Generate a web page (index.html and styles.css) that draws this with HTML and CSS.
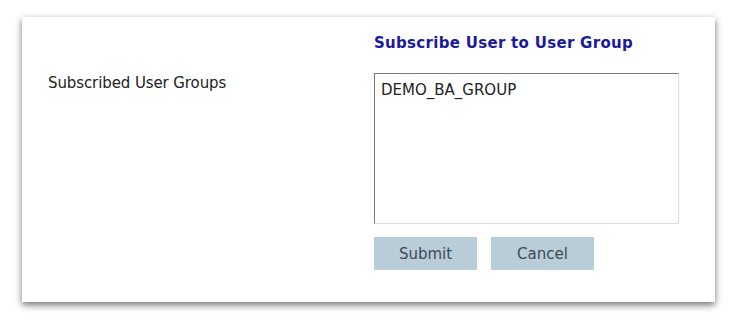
FILE: index.html
```html
<!DOCTYPE html>
<html lang="en">

<head>
  <meta charset="UTF-8">
  <meta name="viewport" content="width=device-width, initial-scale=1.0">
  <title>Subscribe User to User Group</title>
  <link rel="stylesheet" href="styles.css">
</head>

<body>

  <div class="panel">
    <div class="label-col">
      <span class="field-label">Subscribed User Groups</span>
    </div>

    <div class="form-col">
      <h2 class="form-heading">Subscribe User to User Group</h2>
      <div class="group-list">DEMO_BA_GROUP</div>
      <div class="actions">
        <button class="btn">Submit</button>
        <button class="btn">Cancel</button>
      </div>
    </div>
  </div>

</body>

</html>
```

FILE: styles.css
```css
/* Page */
body {
  margin: 0;
  padding: 17px 23px 19px 22px;
  background-color: #ffffff;
  font-family: "DejaVu Sans", Tahoma, sans-serif;
  font-size: 15px;
  line-height: 18px;
  color: #222222;
}

/* The white card with the drop shadow */
.panel {
  display: flex;
  height: 285px;
  box-sizing: border-box;
  background-color: #ffffff;
  box-shadow: 0 3px 7px rgba(0, 0, 0, 0.55);
}

.label-col {
  width: 352px;
  padding: 57px 0 0 26px;
  box-sizing: border-box;
}

.field-label {
  letter-spacing: -0.1px;
}

.form-col {
  padding-top: 17px;
}

.form-heading {
  margin: 0 0 21px 0;
  font-size: 15px;
  line-height: 18px;
  font-weight: bold;
  color: #1a1a9c;
  letter-spacing: 0.3px;
}

/* Read-only list of groups */
.group-list {
  width: 305px;
  height: 151px;
  box-sizing: border-box;
  padding: 7px 6px;
  border: 1px solid #dcdcdc;
  border-top-color: #7a7a7a;
  border-left-color: #7a7a7a;
}

.actions {
  display: flex;
  gap: 14px;
  margin-top: 13px;
}

.btn {
  width: 103px;
  height: 33px;
  padding: 0;
  border: none;
  background-color: #b9cdd8;
  color: #3d4a55;
  font-family: "DejaVu Sans", Tahoma, sans-serif;
  font-size: 15px;
}
```
